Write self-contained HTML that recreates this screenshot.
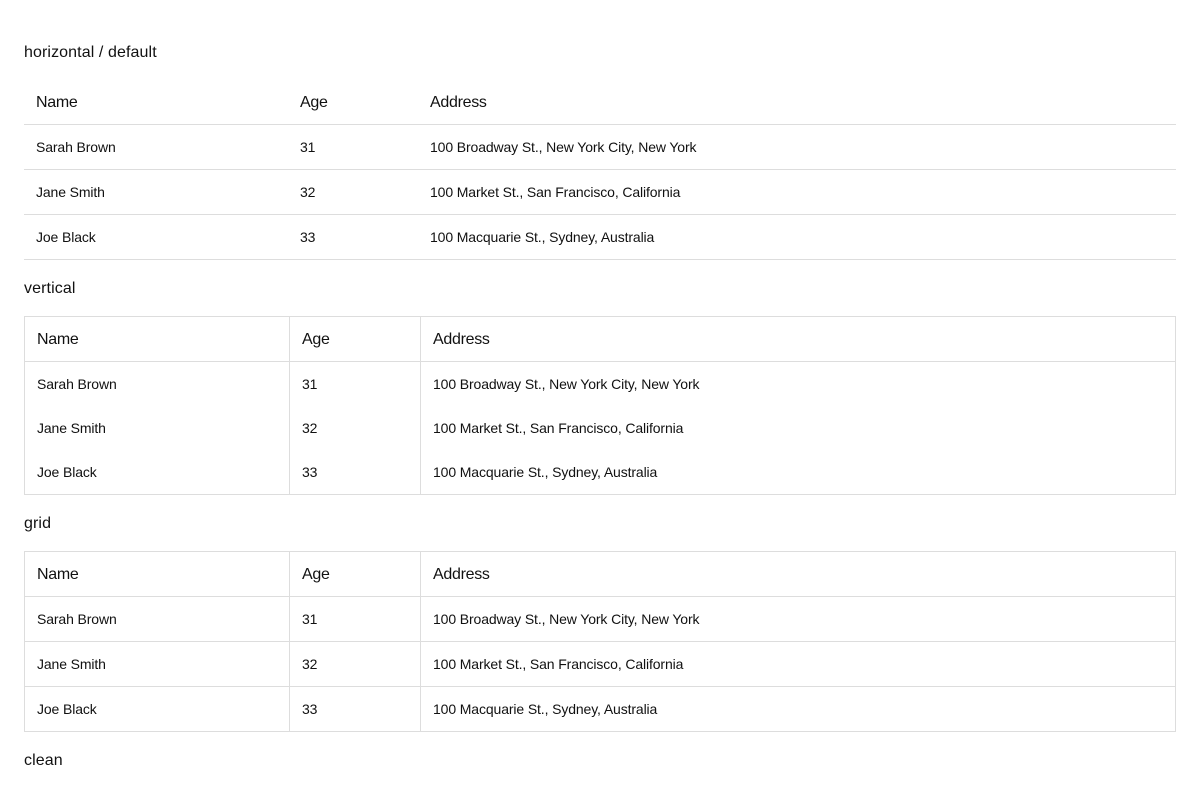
<!DOCTYPE html>
<html><head><meta charset="utf-8"><style>
*{box-sizing:border-box;margin:0;padding:0}
body{width:1200px;height:800px;overflow:hidden;background:#fff;font-family:"Liberation Sans",Arial,sans-serif;color:#111;padding:24px 24px 0}
.t{height:24px;line-height:26px;font-size:16px;margin:16px 0;letter-spacing:0.1px}
.tb{width:1152px}
.r{display:flex;height:45px;border-bottom:1px solid #ddd}
.r div{height:44px;line-height:45px;padding:0 12px;font-size:14px;white-space:nowrap;letter-spacing:-0.12px}
.r.h div{font-size:16px;letter-spacing:-0.3px}
.c1{width:264px}.c2{width:130px}.c3{flex:1}
.v .c2,.g .c2{width:131px}
.v{border:1px solid #ddd}
.v .r div+div{border-left:1px solid #ddd}
.v .r{height:44px;border-bottom:none}
.v .r.h{height:45px;border-bottom:1px solid #ddd}
.v .r div{height:auto;}
.g{border:1px solid #ddd;border-bottom:none}
.g .r div+div{border-left:1px solid #ddd}
.g .r div{height:44px}
</style></head><body>
<div class="t">horizontal / default</div>
<div class="tb">
<div class="r h"><div class="c1">Name</div><div class="c2">Age</div><div class="c3">Address</div></div>
<div class="r"><div class="c1">Sarah Brown</div><div class="c2">31</div><div class="c3">100 Broadway St., New York City, New York</div></div>
<div class="r"><div class="c1">Jane Smith</div><div class="c2">32</div><div class="c3">100 Market St., San Francisco, California</div></div>
<div class="r"><div class="c1">Joe Black</div><div class="c2">33</div><div class="c3">100 Macquarie St., Sydney, Australia</div></div>
</div>
<div class="t">vertical</div>
<div class="tb v">
<div class="r h"><div class="c1">Name</div><div class="c2">Age</div><div class="c3">Address</div></div>
<div class="r"><div class="c1">Sarah Brown</div><div class="c2">31</div><div class="c3">100 Broadway St., New York City, New York</div></div>
<div class="r"><div class="c1">Jane Smith</div><div class="c2">32</div><div class="c3">100 Market St., San Francisco, California</div></div>
<div class="r"><div class="c1">Joe Black</div><div class="c2">33</div><div class="c3">100 Macquarie St., Sydney, Australia</div></div>
</div>
<div class="t">grid</div>
<div class="tb g">
<div class="r h"><div class="c1">Name</div><div class="c2">Age</div><div class="c3">Address</div></div>
<div class="r"><div class="c1">Sarah Brown</div><div class="c2">31</div><div class="c3">100 Broadway St., New York City, New York</div></div>
<div class="r"><div class="c1">Jane Smith</div><div class="c2">32</div><div class="c3">100 Market St., San Francisco, California</div></div>
<div class="r"><div class="c1">Joe Black</div><div class="c2">33</div><div class="c3">100 Macquarie St., Sydney, Australia</div></div>
</div>
<div class="t">clean</div>
</body></html>
